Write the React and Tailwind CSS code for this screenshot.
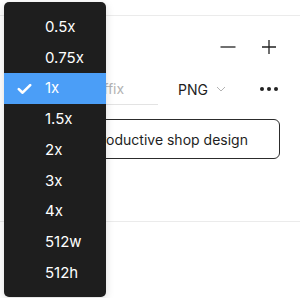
import React from 'react';

const scales = ['0.5x', '0.75x', '1x', '1.5x', '2x', '3x', '4x', '512w', '512h'];

const ScaleMenu = ({ selected }) => (
  <div className="absolute left-[4px] top-[2px] w-[102px] h-[295px] rounded-[5px] bg-[#1e1e1e] py-[10px] shadow-[0_2px_8px_rgba(0,0,0,0.15)]">
    {scales.map((s) => (
      <div
        key={s}
        className={`relative flex items-center h-[30.7px] pl-[41px] text-[15px] text-white ${s === selected ? 'bg-[#4b9ef7]' : ''}`}
      >
        {s === selected && (
          <svg className="absolute left-[13px] top-1/2 -translate-y-1/2" width="15" height="11" viewBox="0 0 15 11" fill="none">
            <path d="M1.8 5.6 L5.6 9.2 L13.2 1.6" stroke="white" strokeWidth="2.6" strokeLinecap="round" strokeLinejoin="round" />
          </svg>
        )}
        {s}
      </div>
    ))}
  </div>
);

const App = () => {
  return (
    <div className="relative w-[300px] h-[298px] bg-white overflow-hidden font-['Inter','Liberation_Sans',sans-serif] text-[#1e1e1e]">
      {/* export panel */}
      <div className="h-[16px] border-b border-[#ebebeb]" />

      <div className="mt-[15px] h-[32px] flex items-center justify-end pr-[23px]">
        <svg width="16" height="16" viewBox="0 0 16 16" fill="none">
          <path d="M0.5 8 H15.5" stroke="#222" strokeWidth="1.3" />
        </svg>
        <svg className="ml-[25px]" width="16" height="16" viewBox="0 0 16 16" fill="none">
          <path d="M1 8 H15 M8 1 V15" stroke="#222" strokeWidth="1.3" />
        </svg>
      </div>

      <div className="mt-[10px] h-[32px] flex items-center text-[14px]">
        <div className="ml-[16px] w-[56px] h-full border-b border-[#e3e3e3]" />
        <div className="ml-[6px] w-[80px] h-full flex items-center pl-[8px] border-b border-[#e3e3e3] text-[#b3b3b3]">
          Suffix
        </div>
        <div className="ml-[20px] flex items-center">
          <span>PNG</span>
          <svg className="ml-[8px]" width="10" height="6" viewBox="0 0 10 6" fill="none">
            <path d="M1 1 L5 5 L9 1" stroke="#b3b3b3" strokeWidth="1" />
          </svg>
        </div>
        <div className="ml-auto mr-[22px] flex items-center gap-[3px]">
          <span className="w-[4px] h-[4px] rounded-full bg-[#222]" />
          <span className="w-[4px] h-[4px] rounded-full bg-[#222]" />
          <span className="w-[4px] h-[4px] rounded-full bg-[#222]" />
        </div>
      </div>

      <button className="mt-[14px] ml-[13px] w-[267px] h-[40px] flex items-center justify-center rounded-[6px] border border-[#2c2c2c] text-[14px] text-[#1e1e1e]">
        Export Productive shop design
      </button>

      <div className="mt-[62px] border-t border-[#ebebeb]" />

      <ScaleMenu selected="1x" />
    </div>
  );
};

export default App;
